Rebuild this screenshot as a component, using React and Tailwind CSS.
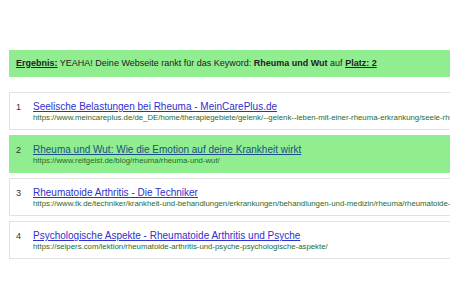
import React from 'react';

const results = [
    { pos: 1, title: 'Seelische Belastungen bei Rheuma - MeinCarePlus.de', url: 'https://www.meincareplus.de/de_DE/home/therapiegebiete/gelenk/--gelenk--leben-mit-einer-rheuma-erkrankung/seele-rheuma' },
    { pos: 2, title: 'Rheuma und Wut: Wie die Emotion auf deine Krankheit wirkt', url: 'https://www.reitgeist.de/blog/rheuma/rheuma-und-wut/', match: true },
    { pos: 3, title: 'Rheumatoide Arthritis - Die Techniker', url: 'https://www.tk.de/techniker/krankheit-und-behandlungen/erkrankungen/behandlungen-und-medizin/rheuma/rheumatoide-arthritis' },
    { pos: 4, title: 'Psychologische Aspekte - Rheumatoide Arthritis und Psyche', url: 'https://selpers.com/lektion/rheumatoide-arthritis-und-psyche-psychologische-aspekte/' },
];

export default function App() {
    return (
        <div className="w-[450px] h-[300px] overflow-hidden bg-white pt-[50px] pl-[9px] font-['Liberation_Sans',Arial,sans-serif]">
            <div className="w-[460px]">
                <div className="bg-[#90ee90] h-[27px] flex items-center pl-[7px] text-[9px] text-[#222] whitespace-nowrap">
                    <span><b className="underline">Ergebnis:</b> YEAHA! Deine Webseite rankt für das Keyword: <b>Rheuma und Wut</b> auf <b className="underline">Platz: 2</b></span>
                </div>
                <div className="mt-[15px] flex flex-col gap-[5px]">
                    {results.map((r) => (
                        <div
                            key={r.pos}
                            className={`h-[38px] flex items-baseline pt-[8px] pl-[6px] border whitespace-nowrap overflow-hidden ${r.match ? 'bg-[#90ee90] border-[#90ee90]' : 'bg-white border-[#e2e2e2]'}`}
                        >
                            <span className="w-[17px] shrink-0 text-[9px] text-[#333]">{r.pos}</span>
                            <div className="flex flex-col leading-none min-w-0">
                                <a href="#" className={`text-[10px] underline ${r.match ? 'text-[#1a4f8a]' : 'text-[#3030cc]'}`}>{r.title}</a>
                                <span className="text-[7.8px] mt-[2px] text-[#1f6b2a]">{r.url}</span>
                            </div>
                        </div>
                    ))}
                </div>
            </div>
        </div>
    );
}
